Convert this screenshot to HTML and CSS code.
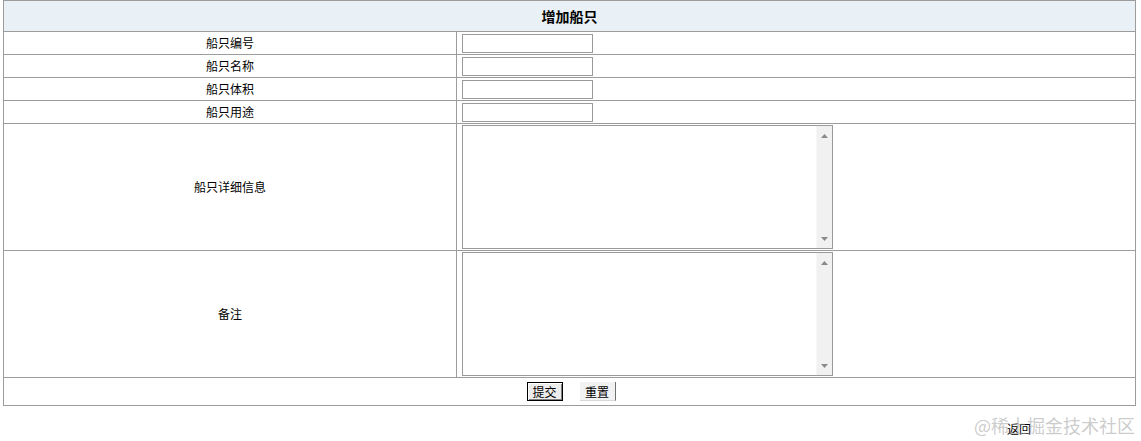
FILE: index.html
```html
<!DOCTYPE html>
<html lang="zh">
<head>
<meta charset="utf-8">
<title>增加船只</title>
<link rel="stylesheet" href="styles.css">
</head>
<body>
<table class="form-table">
  <colgroup><col class="col-label"><col class="col-field"></colgroup>
  <tr class="head-row"><th colspan="2">增加船只</th></tr>
  <tr class="line-row"><td class="label">船只编号</td><td class="field"><input class="text-input" type="text"></td></tr>
  <tr class="line-row"><td class="label">船只名称</td><td class="field"><input class="text-input" type="text"></td></tr>
  <tr class="line-row"><td class="label">船只体积</td><td class="field"><input class="text-input" type="text"></td></tr>
  <tr class="line-row"><td class="label">船只用途</td><td class="field"><input class="text-input" type="text"></td></tr>
  <tr class="area-row"><td class="label">船只详细信息</td><td class="field">
    <div class="area-box">
      <textarea class="area-text"></textarea>
      <div class="fake-scroll">
        <svg width="7" height="4" viewBox="0 0 7 4"><path d="M0 4 L3.5 0 L7 4 Z" fill="#8a8a8a"/></svg>
        <svg width="7" height="4" viewBox="0 0 7 4"><path d="M0 0 L3.5 4 L7 0 Z" fill="#8a8a8a"/></svg>
      </div>
    </div>
  </td></tr>
  <tr class="area-row"><td class="label">备注</td><td class="field">
    <div class="area-box">
      <textarea class="area-text"></textarea>
      <div class="fake-scroll">
        <svg width="7" height="4" viewBox="0 0 7 4"><path d="M0 4 L3.5 0 L7 4 Z" fill="#8a8a8a"/></svg>
        <svg width="7" height="4" viewBox="0 0 7 4"><path d="M0 0 L3.5 4 L7 0 Z" fill="#8a8a8a"/></svg>
      </div>
    </div>
  </td></tr>
  <tr class="btn-row"><td colspan="2">
    <div class="btns">
      <button class="btn btn-default" type="button">提交</button>
      <button class="btn btn-flat" type="button">重置</button>
    </div>
  </td></tr>
</table>
<div class="back-line"><span class="back">返回</span></div>
<div class="watermark">@稀土掘金技术社区</div>
</body>
</html>
```
FILE: styles.css
```css
html, body {
  margin: 0;
  padding: 0;
  background: #ffffff;
}
body {
  font-family: "Noto Sans CJK SC", "Noto Sans", sans-serif;
  font-size: 12px;
  color: #000;
  position: relative;
  height: 441px;
  overflow: hidden;
}
.form-table {
  border-collapse: collapse;
  width: 1133px;
  margin: 0 0 0 3px;
  table-layout: fixed;
}
.col-label {
  width: 453px;
}
.form-table th,
.form-table td {
  border: 1px solid #9c9c9c;
  padding: 0;
}
.head-row th {
  height: 30px;
  background: #e9f0f6;
  font-size: 14px;
  font-weight: bold;
  text-align: center;
  vertical-align: middle;
}
.label {
  text-align: center;
  vertical-align: middle;
  line-height: 14px;
}
.field {
  padding-left: 5px !important;
  vertical-align: middle;
}
.line-row td {
  height: 22px;
}
.text-input {
  display: block;
  box-sizing: border-box;
  width: 131px;
  height: 19px;
  border: 1px solid #9a9a9a;
  margin: 0;
  padding: 0 2px;
  background: #fff;
  outline: none;
}
.area-row td {
  height: 126px;
}
.area-box {
  box-sizing: border-box;
  width: 371px;
  height: 124px;
  border: 1px solid #9a9a9a;
  display: flex;
  background: #fff;
}
.area-text {
  flex: 1;
  border: none;
  margin: 0;
  padding: 2px;
  resize: none;
  outline: none;
  background: #fff;
}
.fake-scroll {
  width: 15px;
  background: #f1f1f1;
  border-left: 1px solid #f7f7f7;
  display: flex;
  flex-direction: column;
  justify-content: space-between;
  align-items: center;
  padding: 8px 0 7px;
}
.btn-row td {
  height: 27px;
  text-align: center;
  vertical-align: middle;
}
.btns {
  display: flex;
  justify-content: center;
  gap: 17px;
  padding-left: 3px;
}
.btn {
  box-sizing: border-box;
  width: 36px;
  height: 19px;
  margin: 0;
  padding: 0;
  font-family: "Noto Sans CJK SC", sans-serif;
  font-size: 12px;
  line-height: 15px;
  color: #000;
  background: #ececec;
}
.btn-default {
  border: 1px solid #000;
  box-shadow: inset 1px 1px 0 #fff, inset -1px -1px 0 #808080;
}
.btn-flat {
  border: none;
  border-right: 1px solid #707070;
  border-bottom: 1px solid #d8d8d8;
  background: #f2f2f2;
}
.back-line {
  text-align: right;
  padding: 15px 110px 0 0;
  line-height: 16px;
}
.back {
  font-size: 12px;
}
.watermark {
  position: absolute;
  right: 6px;
  top: 414px;
  font-size: 18px;
  line-height: 22px;
  color: rgba(160, 160, 160, 0.55);
  pointer-events: none;
}
```
